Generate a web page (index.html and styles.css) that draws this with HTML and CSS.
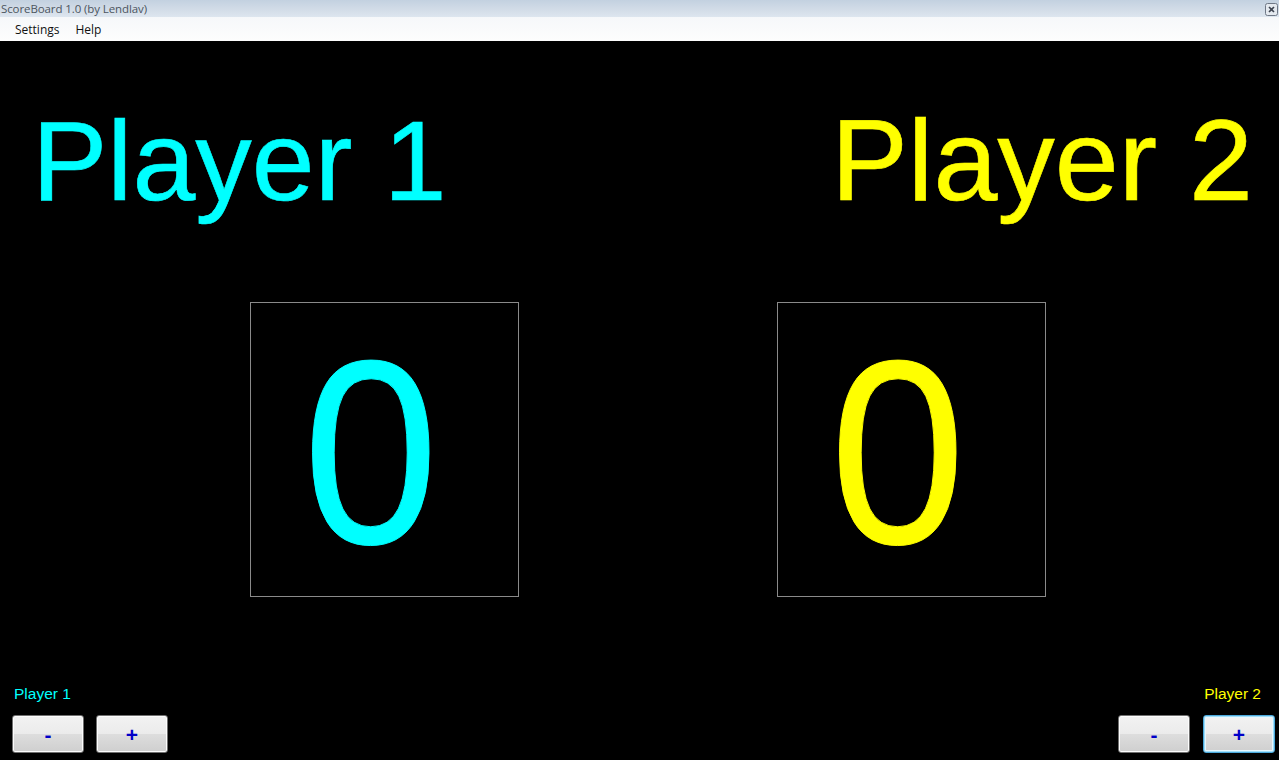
FILE: index.html
```html
<!DOCTYPE html>
<html>
<head>
<meta charset="utf-8">
<title>ScoreBoard 1.0 (by Lendlav)</title>
<link rel="stylesheet" href="styles.css">
</head>
<body>
<div class="window">
  <div class="titlebar">
    <span class="title">ScoreBoard 1.0 (by Lendlav)</span>
    <span class="close">
      <svg width="13" height="13" viewBox="0 0 13 13">
        <rect x="0.5" y="0.5" width="12" height="12" rx="2" fill="#e4e9ef" stroke="#6f7886"/>
        <path d="M4 4 L9 9 M9 4 L4 9" stroke="#3d4450" stroke-width="1.6"/>
      </svg>
    </span>
  </div>
  <div class="menubar">
    <span class="menu-item">Settings</span>
    <span class="menu-item">Help</span>
  </div>
  <div class="main">
    <div class="names">
      <div class="name p1">Player 1</div>
      <div class="name p2">Player 2</div>
    </div>
    <div class="scores">
      <div class="score-box p1"><span class="digit">0</span></div>
      <div class="score-box p2"><span class="digit">0</span></div>
    </div>
    <div class="controls">
      <div class="ctrl left">
        <div class="label p1">Player 1</div>
        <div class="buttons">
          <button class="btn">-</button>
          <button class="btn">+</button>
        </div>
      </div>
      <div class="ctrl right">
        <div class="label p2">Player 2</div>
        <div class="buttons">
          <button class="btn">-</button>
          <button class="btn focused">+</button>
        </div>
      </div>
    </div>
  </div>
</div>
</body>
</html>
```

FILE: styles.css
```css
* { box-sizing: border-box; }
html, body {
  margin: 0;
  padding: 0;
  width: 1279px;
  height: 760px;
  overflow: hidden;
  background: #000;
}
.window {
  width: 1279px;
  height: 760px;
  display: flex;
  flex-direction: column;
}
.titlebar {
  height: 17px;
  display: flex;
  justify-content: space-between;
  align-items: center;
  background: linear-gradient(to bottom, #c3d1e0 0%, #d3dde8 60%, #dde6ef 100%);
  padding: 0 1px 0 1px;
}
.title {
  font-family: "Open Sans", "Noto Sans", sans-serif;
  font-size: 11.5px;
  color: #4c5560;
  line-height: 17px;
  letter-spacing: -0.1px;
}
.close {
  display: flex;
  margin-top: 1px;
}
.menubar {
  height: 24px;
  background: linear-gradient(to bottom, #f6f8fa, #fdfdfd);
  display: flex;
  align-items: center;
  padding-left: 15px;
  gap: 16px;
  font-family: "Open Sans", "Noto Sans", sans-serif;
  font-size: 12px;
  color: #111;
}
.main {
  flex: 1;
  background: #000;
  display: flex;
  flex-direction: column;
  font-family: "Liberation Sans", Arial, sans-serif;
}
.p1 { color: #00ffff; }
.p2 { color: #ffff00; }
.names {
  display: flex;
  justify-content: space-between;
  padding: 64px 26px 0 32px;
}
.name {
  font-size: 113px;
  line-height: 113px;
  white-space: nowrap;
  -webkit-text-stroke: 0.6px currentColor;
}
.name.p2 {
  font-size: 115px;
  margin-top: -1px;
}
.scores {
  display: flex;
  gap: 258px;
  padding-left: 250px;
  margin-top: 84px;
}
.score-box {
  width: 269px;
  height: 295px;
  border: 1px solid #8a8a8a;
  padding: 19px 0 0 52px;
}
.digit {
  display: block;
  font-size: 262px;
  line-height: 262px;
  transform: scaleX(0.93);
  transform-origin: left center;
  -webkit-text-stroke: 1px currentColor;
}
.controls {
  margin-top: auto;
  display: flex;
  justify-content: space-between;
  padding: 0 4px 7px 12px;
}
.ctrl {
  display: flex;
  flex-direction: column;
}
.ctrl.left { align-items: flex-start; }
.ctrl.right { align-items: flex-end; }
.label {
  font-size: 15.5px;
  line-height: 18px;
  margin-bottom: 12px;
}
.ctrl.left .label { margin-left: 2px; }
.ctrl.right .label { margin-right: 14px; }
.buttons {
  display: flex;
  gap: 12px;
}
.ctrl.right .buttons { gap: 13px; }
.btn {
  width: 72px;
  height: 38px;
  border: 1px solid #707070;
  border-radius: 3px;
  background: linear-gradient(to bottom, #f2f2f2 0%, #ebebeb 50%, #dddddd 51%, #cfcfcf 100%);
  box-shadow: inset 0 0 0 1px #fcfcfc;
  color: #0000c8;
  font-family: "Liberation Sans", Arial, sans-serif;
  font-weight: bold;
  font-size: 21px;
  line-height: 1;
  padding: 1px 0 0 0;
  margin: 0;
}
.btn.focused {
  border-color: #4aa8db;
  box-shadow: inset 0 0 0 1px #9fdcf6, inset 0 0 0 2px #e6f6fd;
}
```
